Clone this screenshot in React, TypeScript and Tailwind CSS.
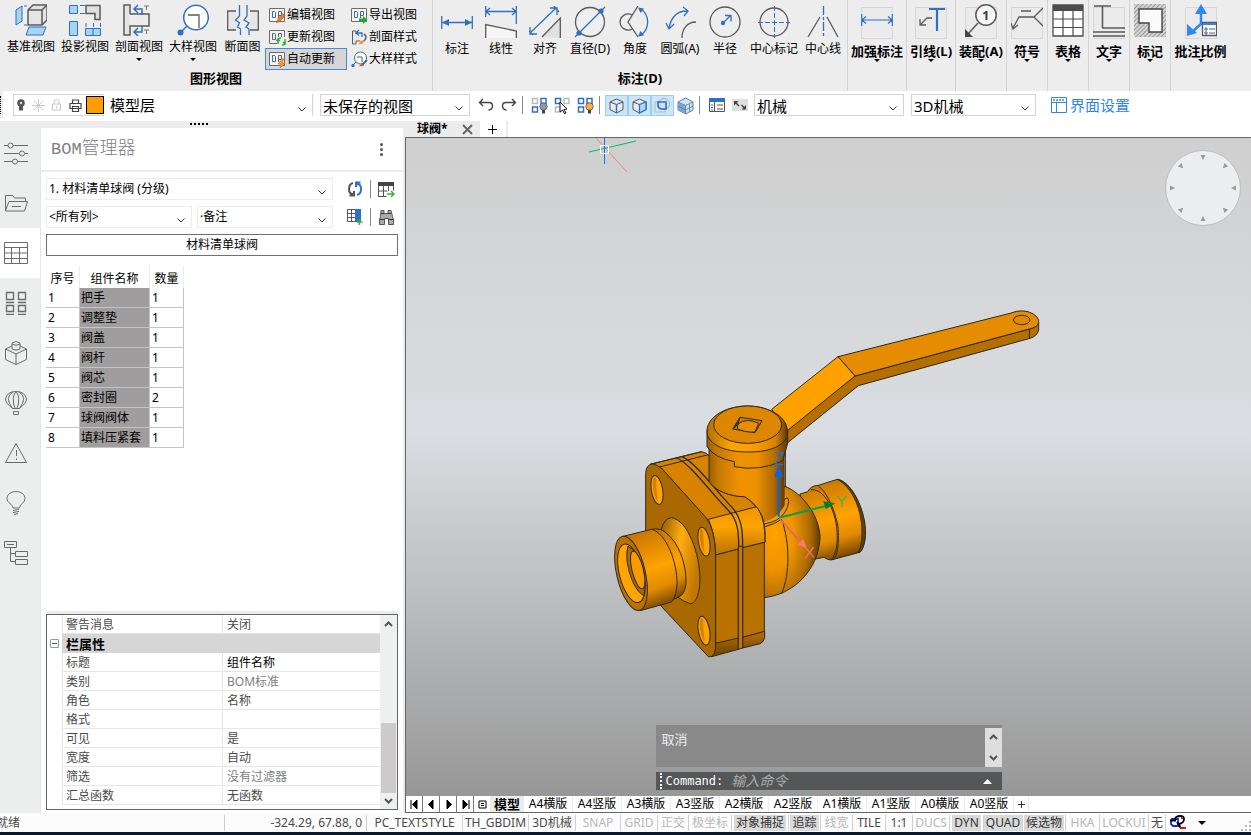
import React from "react";
import clsx from "clsx";

const BLUE = "#2f6fc4";
const GRAY = "#5a5a5a";

type Kids = { children?: React.ReactNode };

function Svg({ children, size = 32, box = 32, className }: Kids & { size?: number; box?: number; className?: string }) {
  return (
    <svg width={size} height={size} viewBox={`0 0 ${box} ${box}`} fill="none" className={clsx("shrink-0", className)} aria-hidden="true">
      {children}
    </svg>
  );
}

function Caret() {
  return (
    <svg width="6" height="3" viewBox="0 0 6 3" aria-hidden="true">
      <path d="M0 0h6L3 3z" fill="#000" />
    </svg>
  );
}

/* ---------- ribbon icons ---------- */

const baseView = (
  <Svg>
    <path d="M1 6l6-4v15l-6 4z" fill="#a9d4f0" stroke={BLUE} />
    <path d="M9 2h4M9 21h3" stroke={BLUE} strokeDasharray="3 2" />
    <path d="M13 6l5-5h14v15l-5 5H13z" fill="#e4e4e4" stroke={GRAY} strokeWidth="1.5" />
    <path d="M13 6h14v15M27 6l5-5" stroke={GRAY} strokeWidth="1.5" />
    <path d="M14 23h17l-3 8H11z" fill="#a9d4f0" stroke={BLUE} />
  </Svg>
);
const projView = (
  <Svg>
    <path d="M.5 1.500h8v8h-8z" fill="#a9d4f0" stroke={BLUE} />
    <path d="M17 1.500h14v14h-5v-6h-9z" fill="#e0e0e0" stroke={GRAY} strokeWidth="1.500" />
    <path d="M.5 17.500h8v14h-8zM16.500 24.500h15v7h-15zM24 24.500v7" fill="#a9d4f0" stroke={BLUE} />
    <path d="M11 1.500h5M11 9.500h5M17 19v4M24.500 19v4M31.500 19v4" stroke={BLUE} />
  </Svg>
);
const sectionView = (
  <Svg>
    <path d="M1 1h6v30H1z" fill="#e6e6e6" />
    <path d="M7 10h18v12H7z" fill="#ececec" />
    <path d="M7 10V1H1v30h6v-9h19V10H7" stroke={GRAY} strokeWidth="1.500" />
    <path d="M12 5h7v6M15 1l-4 4 4 4M12 28h7v-6M15 24l-4 4 4 4" stroke={BLUE} strokeWidth="1.500" />
    <path d="M21 2h5M23.500 2v4M21 26h5M23.500 26v4" stroke="#777" />
  </Svg>
);
const detailView = (
  <Svg>
    <circle cx="19" cy="13.500" r="12.300" fill="#fff" stroke={BLUE} strokeWidth="1.500" />
    <path d="M11 11h11v13" stroke={GRAY} strokeWidth="1.300" />
    <path d="M10 22l-7 7" stroke={BLUE} strokeWidth="1.500" />
    <circle cx="3.500" cy="28.500" r="3" fill={BLUE} />
  </Svg>
);
const breakView = (
  <Svg>
    <path d="M9 7H.7v19H9M23 7h8.300v19H23" fill="#e6e6e6" stroke={GRAY} strokeWidth="1.300" />
    <path d="M12.500 1v11l-4 4 4 3-2 4 3 2v6M20 1v11l-3 4 5 3-3 4 3 2v6" stroke={BLUE} strokeWidth="1.300" />
  </Svg>
);

const sheet = (
  <>
    <path d="M.5 1.500h15v13H.5z" fill="#f3f3f3" stroke="#6c6c6c" />
    <path d="M3.500 4.500h2l1 1v5h-3zM9.500 11V4.500h3V8M9.500 8.500h3" stroke="#4a6a86" />
  </>
);
const editViewIcon = (
  <Svg size={17} box={17}>
    {sheet}
    <path d="M7.500 15.500l1-3 5-6 2.500 2-5 6z" fill="#ee7d30" stroke="#b34a12" strokeWidth=".6" />
  </Svg>
);
const updateViewIcon = (
  <Svg size={17} box={17}>
    {sheet}
    <path d="M8 8h9v9H8z" fill="#f3f3f3" />
    <path d="M9 15v-4q0-2 3-2M16 10v4q0 2-3 2M7.500 12L9 10l2 2M14 13l2 2 1-2" stroke="#27ae35" strokeWidth="1.400" />
  </Svg>
);
const autoUpdateIcon = (
  <Svg size={17} box={17}>
    {sheet}
    <path d="M13 8l-4 5h3l-1 4 5-5h-3l2-4z" fill="#f5a623" stroke="#e0661a" strokeWidth=".7" />
  </Svg>
);
const exportViewIcon = (
  <Svg size={17} box={17}>
    {sheet}
    <path d="M8 11.500h4V9l4.500 4-4.500 4v-2.500H8z" fill="#23a82d" />
  </Svg>
);
const sectionStyleIcon = (
  <Svg size={17} box={17}>
    <path d="M5 5V2H1.500v13H5v-3h4" stroke={GRAY} fill="#e8e8e8" />
    <path d="M11 8V4H5.500M8 1L5 4l3 2.500" stroke={BLUE} strokeWidth="1.300" />
    <path d="M6 15q3 0 3-3l4-1q1 5-7 4z" fill="#f0a030" />
    <path d="M13 5q4 3 0 7" stroke="#59656e" strokeWidth="1.600" />
  </Svg>
);
const detailStyleIcon = (
  <Svg size={17} box={17}>
    <circle cx="9.500" cy="7" r="6" fill="#fff" stroke={BLUE} />
    <path d="M6 6h5v5M5 11l-3 3" stroke={GRAY} />
    <circle cx="2" cy="14.500" r="1.700" fill={BLUE} />
    <path d="M7 15q3 0 3-3l3 1q1 3-6 2z" fill="#a0683a" />
    <path d="M12 13l4-4" stroke="#59656e" strokeWidth="1.800" />
  </Svg>
);

const dimIcon = (
  <Svg>
    <path d="M.7 10v13M31.300 10v13M1 16.500h30" stroke={BLUE} strokeWidth="1.300" />
    <path d="M1 16.500l7-3.500v7zM31 16.500l-7-3.500v7z" fill={BLUE} />
  </Svg>
);
const linearIcon = (
  <Svg>
    <path d="M.7 0v11M31.300 0v18M1 5.500h30M5 2L1 5.500 5 9M27 2l4 3.500L27 9" stroke={BLUE} strokeWidth="1.300" />
    <path d="M.7 32V18.500L31.300 25v7" fill="#f6f6f6" stroke={GRAY} strokeWidth="1.300" />
  </Svg>
);
const alignedIcon = (
  <Svg>
    <path d="M31.300 32V12L13 31" fill="#e0e0e0" stroke={GRAY} strokeWidth="1.300" />
    <path d="M1 27L27 2M0 25l4 4M25 0l5 6M21 2h7v7M1 21v7h7" stroke={BLUE} strokeWidth="1.300" />
  </Svg>
);
const diameterIcon = (
  <Svg>
    <circle cx="16" cy="16" r="14.500" fill="#efefef" stroke={GRAY} strokeWidth="1.300" />
    <path d="M1 31L31 1" stroke={BLUE} strokeWidth="1.300" />
    <circle cx="5" cy="27" r="2.600" fill={BLUE} />
    <circle cx="27" cy="5" r="2.600" fill={BLUE} />
  </Svg>
);
const angleIcon = (
  <Svg>
    <path d="M19 0L9 16l10 15M13 9a8 8 0 100 14" stroke={GRAY} strokeWidth="1.300" />
    <path d="M22 3a16 16 0 010 26" stroke={BLUE} strokeWidth="1.300" />
    <path d="M19 1.500l6 1-3.500 4.500zM19 30.500l6-1-3.500-4.500z" fill={BLUE} />
  </Svg>
);
const arcIcon = (
  <Svg>
    <path d="M18 32C18 23 23 16 32 16" stroke={GRAY} strokeWidth="1.300" />
    <path d="M5 22C7 12 13 5 23 5M19 1l5 4-4 5M2 17l3 6 5-5" stroke={BLUE} strokeWidth="1.300" />
  </Svg>
);
const radiusIcon = (
  <Svg>
    <circle cx="16" cy="16" r="15" stroke={GRAY} strokeWidth="1.300" />
    <path d="M14 17l7-7M16 9.500h6v6" stroke={BLUE} strokeWidth="1.300" />
    <circle cx="14" cy="17" r="2.200" fill={BLUE} />
  </Svg>
);
const centerMarkIcon = (
  <Svg>
    <circle cx="16" cy="16" r="14" stroke={GRAY} strokeWidth="1.300" />
    <path d="M16.500 0v32M0 16.500h32" stroke={BLUE} strokeDasharray="5 2" />
  </Svg>
);
const centerLineIcon = (
  <Svg>
    <path d="M1 31l12-20M31 31L20 11" stroke={GRAY} strokeWidth="1.300" />
    <path d="M16.500 0v32" stroke={BLUE} strokeWidth="1.300" strokeDasharray="9 2 3 2" />
  </Svg>
);

const ghost = <path d="M.5 3.500h31v31H.5z" stroke="#d6d6d6" fill="#ebebeb" />;

function TallSvg({ children }: Kids) {
  return (
    <svg width="32" height="36" viewBox="0 0 32 36" fill="none" aria-hidden="true">
      {children}
    </svg>
  );
}

const toolGroups: { label: string; width: string; icon: React.ReactNode }[] = [
  {
    label: "加强标注",
    width: "w-[59px]",
    icon: (
      <TallSvg>
        {ghost}
        <path d="M.7 10v12M31.300 10v12M1 16h30M5 12.500L1 16l4 3.500M27 12.500l4 3.500-4 3.500" stroke={BLUE} strokeWidth="1.200" />
      </TallSvg>
    ),
  },
  {
    label: "引线(L)",
    width: "w-[49px]",
    icon: (
      <TallSvg>
        {ghost}
        <path d="M14 5h16M22 5v22" stroke={BLUE} strokeWidth="2.200" />
        <path d="M17 14h-5l-6 6M5 15v6h6" stroke={GRAY} strokeWidth="1.300" />
      </TallSvg>
    ),
  },
  {
    label: "装配(A)",
    width: "w-[51px]",
    icon: (
      <TallSvg>
        {ghost}
        <path d="M13 19L3 30" stroke={GRAY} strokeWidth="1.500" />
        <path d="M0 33v-8l8 8z" fill="#444" />
        <circle cx="21" cy="11" r="10.200" fill="#f6f6f6" stroke={GRAY} strokeWidth="1.500" />
        <text x="17" y="16" fontSize="13" fontWeight="700" fill="#444">1</text>
      </TallSvg>
    ),
  },
  {
    label: "符号",
    width: "w-[41px]",
    icon: (
      <TallSvg>
        {ghost}
        <path d="M32 4l-9 9 9 9M23 13H8L2 24M0 19l2 6 5-4M10 7h10" stroke={GRAY} strokeWidth="1.300" />
      </TallSvg>
    ),
  },
  {
    label: "表格",
    width: "w-[41px]",
    icon: (
      <TallSvg>
        <path d="M1 1h30v31H1z" fill="#fff" stroke="#4c4c4c" strokeWidth="1.300" />
        <path d="M1 1h30v6H1z" fill="#4c4c4c" />
        <path d="M1 15h30M1 23.500h30M11 6v26M21 6v26" stroke="#4c4c4c" strokeWidth="1.200" />
      </TallSvg>
    ),
  },
  {
    label: "文字",
    width: "w-[41px]",
    icon: (
      <TallSvg>
        {ghost}
        <path d="M1 2h17M9.500 2v22M9 24h23M0 28h32M0 32h32" stroke={GRAY} strokeWidth="1.600" />
      </TallSvg>
    ),
  },
  {
    label: "标记",
    width: "w-[41px]",
    icon: (
      <TallSvg>
        <defs>
          <pattern id="hatch" width="3" height="3" patternUnits="userSpaceOnUse" patternTransform="rotate(45)">
            <path d="M0 0v3" stroke="#8a8a8a" strokeWidth="1.600" />
          </pattern>
        </defs>
        <path d="M0 0h32v33H0z" fill="#d4d4d4" />
        <path d="M0 0h32v33H0z" fill="url(#hatch)" />
        <path d="M5 5h23v23H15v-9H5z" fill="#fafafa" stroke="#444" strokeWidth="1.400" />
      </TallSvg>
    ),
  },
  {
    label: "批注比例",
    width: "w-[59px]",
    icon: (
      <TallSvg>
        {ghost}
        <path d="M16 6v14L7 28" stroke="#2f86f6" strokeWidth="2.500" />
        <path d="M16 0l6 10H10zM2 32V20l10 9z" fill="#2f86f6" />
        <path d="M17.500 18.500h14v13h-14z" fill="#fff" stroke={GRAY} strokeWidth="1.300" />
        <path d="M18 20h13" stroke="#2f86f6" strokeWidth="2" />
        <path d="M20 24h2v2h-2zM20 28h2v2h-2z" stroke={BLUE} />
        <path d="M24 25h6M24 29h6" stroke={GRAY} />
      </TallSvg>
    ),
  },
];

function BigButton({ icon, label, width, caret }: { icon: React.ReactNode; label: string; width: string; caret?: boolean }) {
  return (
    <button type="button" className={clsx("flex shrink-0 flex-col items-center text-[12px] leading-4 whitespace-nowrap", width)}>
      {icon}
      <span className="mt-[3px]">{label}</span>
      {caret && <span className="mt-[3px] flex"><Caret /></span>}
    </button>
  );
}

function SmallButton({ icon, label, active }: { icon: React.ReactNode; label: string; active?: boolean }) {
  return (
    <button
      type="button"
      aria-pressed={active}
      className={clsx(
        "flex h-[22px] items-center gap-px border px-[3px] text-[12px] leading-4 whitespace-nowrap",
        active ? "border-[#3f8ce0] bg-[#d6d6d6]" : "border-transparent",
      )}
    >
      {icon}
      <span>{label}</span>
    </button>
  );
}

function Ribbon() {
  return (
    <div className="flex h-[91px] shrink-0 overflow-hidden bg-[#ededed]">
      <section className="flex w-[433px] shrink-0 flex-col border-r border-[#d2d2d2] pt-1 pl-1">
        <div className="flex h-[66px]">
          <BigButton icon={baseView} label="基准视图" width="w-[54px]" />
          <BigButton icon={projView} label="投影视图" width="w-[54px]" />
          <BigButton icon={sectionView} label="剖面视图" width="w-[54px]" caret />
          <BigButton icon={detailView} label="大样视图" width="w-[54px]" caret />
          <BigButton icon={breakView} label="断面图" width="w-[45px]" />
          <div className="flex w-[82px] shrink-0 flex-col">
            <SmallButton icon={editViewIcon} label="编辑视图" />
            <SmallButton icon={updateViewIcon} label="更新视图" />
            <SmallButton icon={autoUpdateIcon} label="自动更新" active />
          </div>
          <div className="flex shrink-0 flex-col">
            <SmallButton icon={exportViewIcon} label="导出视图" />
            <SmallButton icon={sectionStyleIcon} label="剖面样式" />
            <SmallButton icon={detailStyleIcon} label="大样样式" />
          </div>
        </div>
        <h2 className="pr-1 text-center text-[13px] leading-4 font-bold">图形视图</h2>
      </section>
      <section className="flex w-[415px] shrink-0 flex-col border-r border-[#d2d2d2] pt-1.5 pl-0.5">
        <div className="flex h-16">
          <BigButton icon={dimIcon} label="标注" width="w-11" />
          <BigButton icon={linearIcon} label="线性" width="w-11" />
          <BigButton icon={alignedIcon} label="对齐" width="w-11" />
          <BigButton icon={diameterIcon} label="直径(D)" width="w-[46px]" />
          <BigButton icon={angleIcon} label="角度" width="w-11" />
          <BigButton icon={arcIcon} label="圆弧(A)" width="w-[46px]" />
          <BigButton icon={radiusIcon} label="半径" width="w-11" />
          <BigButton icon={centerMarkIcon} label="中心标记" width="w-[54px]" />
          <BigButton icon={centerLineIcon} label="中心线" width="w-11" />
        </div>
        <h2 className="pr-0.5 text-center text-[13px] leading-4 font-bold">标注(D)</h2>
      </section>
      {toolGroups.map((g, i) => (
        <section key={g.label} className={clsx("shrink-0 pt-1", g.width, i < toolGroups.length - 1 && "border-r border-[#d2d2d2]")}>
          <button type="button" className="flex w-full flex-col items-center text-[13px] leading-4 font-bold whitespace-nowrap">
            {g.icon}
            <span className="mt-[3px]">{g.label}</span>
            <Caret />
          </button>
        </section>
      ))}
    </div>
  );
}

/* ---------- toolbar ---------- */

function Select({ label, value, className, textClass = "text-[15px]" }: { label: string; value: string; className?: string; textClass?: string }) {
  return (
    <div className={clsx("relative flex h-[22px] shrink-0 items-center border border-[#d4d4d4] bg-white", className)}>
      <select aria-label={label} defaultValue={value} className={clsx("h-full w-full appearance-none bg-transparent px-0.5 text-black outline-none", textClass)}>
        <option>{value}</option>
      </select>
      <svg width="8" height="5" viewBox="0 0 8 5" fill="none" className="pointer-events-none absolute right-1.5 bottom-1" aria-hidden="true">
        <path d="M.5.5L4 4 7.500.5" stroke="#333" />
      </svg>
    </div>
  );
}

function ToolSep() {
  return <span className="h-[18px] w-px shrink-0 bg-[#8a8a8a]" />;
}

function IconButton({ label, active, children }: Kids & { label: string; active?: boolean }) {
  return (
    <button
      type="button"
      aria-label={label}
      aria-pressed={active}
      className={clsx("flex h-[21px] w-[23px] shrink-0 items-center justify-center", active && "border border-[#99cdf3] bg-[#cce6f8]")}
    >
      {children}
    </button>
  );
}

function Squares({ fills, children }: Kids & { fills: string[] }) {
  return (
    <Svg size={17} box={17}>
      <path d="M1.500 1.500h5v5h-5z" stroke={fills[0]} strokeWidth="1.500" />
      <path d="M10 1.500h5v5h-5z" stroke={fills[1]} strokeWidth="1.500" />
      <path d="M1.500 10h5v5h-5z" stroke={fills[2]} strokeWidth="1.500" />
      {children}
    </Svg>
  );
}

function Bulb({ color }: { color: string }) {
  return (
    <>
      <circle cx="12.500" cy="9.500" r="3.700" fill={color} stroke="#555" strokeWidth=".8" />
      <path d="M11 13h3v3.500h-3z" fill="#444" />
    </>
  );
}

function Toolbar() {
  return (
    <div className="flex h-[30px] shrink-0 items-center bg-white pb-0.5">
      <div className="flex h-full w-[3px] shrink-0 items-center bg-[#ededed]">
        <span className="h-[18px] w-0 border-l border-dotted border-black" />
      </div>
      <div className="ml-2.5 flex h-[22px] w-[300px] shrink-0 items-center border border-[#d4d4d4]">
        <Svg size={12} box={12} className="mx-px">
          <circle cx="6" cy="4" r="3.800" fill="#555" />
          <path d="M4 7h4v4.500H4z" fill="#555" />
          <circle cx="6" cy="4" r="1.200" fill="#ddd" />
        </Svg>
        <Svg size={13} box={13} className="mx-1">
          <path d="M6.500 0v13M0 6.500h13M2 2l9 9M11 2l-9 9" stroke="#ccc" />
        </Svg>
        <Svg size={12} box={12} className="mx-0.5">
          <path d="M1.500 5h8v6h-8zM3 5V3a2.500 2.500 0 015 0v2M5.500 7v2" stroke="#c8c8c8" />
        </Svg>
        <Svg size={13} box={13} className="mx-1">
          <path d="M3.500 4V1h6v3M1 4.500h11v5H1zM3.500 7.500h6v5h-6z" stroke="#444" strokeWidth="1.200" fill="#fff" />
        </Svg>
        <span className="h-[18px] w-[18px] shrink-0 border border-black bg-[#ff9d00]" />
        <Select label="图层" value="模型层" className="min-w-0 flex-1 border-0 bg-transparent pl-1" />
      </div>
      <Select label="视图" value="未保存的视图" className="ml-[7px] w-[150px]" />
      <div className="ml-1 flex items-center">
        <IconButton label="撤销">
          <Svg size={16} box={16}>
            <path d="M5 2L1.500 5.500 5 9M2 5.500h9q3.500 0 3.500 3.500t-4 4" stroke="#444" strokeWidth="1.400" />
          </Svg>
        </IconButton>
        <IconButton label="重做">
          <Svg size={16} box={16}>
            <path d="M11 2l3.500 3.500L11 9M14 5.500H5Q1.500 5.500 1.500 9t4 4" stroke="#444" strokeWidth="1.400" />
          </Svg>
        </IconButton>
      </div>
      <span className="ml-0.5 flex"><ToolSep /></span>
      <div className="ml-[5px] flex items-center">
        <IconButton label="隐藏图元"><Squares fills={["#bbb", BLUE, BLUE]}><Bulb color="#8d99a5" /></Squares></IconButton>
        <IconButton label="选择图元">
          <Squares fills={[BLUE, "#bbb", "#bbb"]}>
            <path d="M6 5l7 7-3 .5 2 3.500-1.500.5-2-3.500L6 15z" fill="#fff" stroke="#111" />
          </Squares>
        </IconButton>
        <IconButton label="显示图元"><Squares fills={[BLUE, BLUE, BLUE]}><Bulb color="#f9b233" /></Squares></IconButton>
      </div>
      <span className="ml-0.5 flex"><ToolSep /></span>
      <div className="ml-[5px] flex items-center">
        <IconButton label="边" active>
          <Svg size={17} box={17}>
            <path d="M2 5l6.500-3L15 5v7.500L8.500 16 2 12.500zM2 5l6.500 2.500L15 5" stroke="#555" fill="#e3edf5" />
            <path d="M8.500 7.500V16" stroke={BLUE} strokeWidth="1.500" />
          </Svg>
        </IconButton>
        <IconButton label="面" active>
          <Svg size={17} box={17}>
            <path d="M2 5l6.500-3L15 5v7.500L8.500 16 2 12.500zM2 5l6.500 2.500" stroke="#555" fill="#e3edf5" />
            <path d="M8.500 7.500L15 5v7.500L8.500 16z" fill="#b4d8f4" stroke={BLUE} strokeWidth="1.300" />
          </Svg>
        </IconButton>
        <IconButton label="边界" active>
          <Svg size={17} box={17}>
            <path d="M5 5H1v10h10v-3" stroke="#b9b9b9" />
            <circle cx="10" cy="7" r="5.500" stroke="#b0b0b0" />
            <path d="M4 5h8v7H8q-4 0-4-4z" stroke={BLUE} strokeWidth="1.600" />
          </Svg>
        </IconButton>
        <IconButton label="实体">
          <Svg size={17} box={17}>
            <path d="M1 5l7.500-4L16 5v8l-7.500 4L1 13z" fill="#d3e2f0" stroke="#5580ad" />
            <path d="M1 5l7.500 3.500V17L1 13z" fill="#7ba7d2" />
            <path d="M1 5l7.500 3.500L16 5M8.500 8.500V17M8.500 13l7.500-4M12.500 7v8M1 9l7.500 4" stroke="#5580ad" strokeWidth=".8" />
          </Svg>
        </IconButton>
      </div>
      <span className="ml-0.5 flex"><ToolSep /></span>
      <div className="ml-[5px] flex items-center">
        <IconButton label="特性">
          <Svg size={16} box={16}>
            <path d="M.5 1.500h15v13H.5z" fill="#fff" stroke="#555" />
            <path d="M0 1h16v4H0z" fill={BLUE} />
            <path d="M5.500 5v10M8 8h6M8 12h6" stroke="#555" />
            <path d="M2 8h2M2 10.500h2M2 13h2" stroke={BLUE} />
          </Svg>
        </IconButton>
        <IconButton label="展开">
          <Svg size={16} box={16}>
            <path d="M0 2h16v12H0z" fill="#dedede" />
            <path d="M2 4h4.500L2 8.500zM14 12.500H9.500L14 8z" fill="#444" />
            <path d="M3 5l4 4M13 11.500L9.500 8" stroke="#444" strokeWidth="1.500" />
          </Svg>
        </IconButton>
      </div>
      <Select label="工作空间" value="机械" className="ml-[3px] w-[150px]" />
      <Select label="界面" value="3D机械" className="ml-[7px] w-[125px]" />
      <button type="button" className="ml-[15px] flex items-center gap-[3px] text-[15px] leading-5 whitespace-nowrap text-[#2d86f0]">
        <Svg size={16} box={16}>
          <path d="M.5.5h15v15H.5zM.5 5.500h15M5.500 5.500v10" stroke="currentColor" />
          <path d="M2 3h12" stroke="currentColor" strokeWidth="1.500" strokeDasharray="2 1" />
        </Svg>
        界面设置
      </button>
    </div>
  );
}

/* ---------- left rail ---------- */

const railItems: { label: string; art: React.ReactNode }[] = [
  {
    label: "参数",
    art: (
      <>
        <path d="M0 4.500h4M9 4.500h15M0 12.500h15M21 12.500h3M0 20.500h8M14 20.500h10" />
        <circle cx="6.500" cy="4.500" r="2.500" /><circle cx="18" cy="12.500" r="2.500" /><circle cx="11" cy="20.500" r="2.500" />
      </>
    ),
  },
  { label: "项目", art: <path d="M1.500 19.500v-15h7l2 2.500h11v4M1.500 19.500l3.500-9h18.500l-3 9.500h-19M8 15.500h9" /> },
  { label: "BOM管理器", art: <path d="M.5 1.500h23v21H.5zM.5 6.500h23M.5 12h23M.5 17.500h23M7.500 6.500v16M15.500 6.500v16" /> },
  { label: "块", art: <path d="M2.500 1.500h7v7h-7zM14.500 1.500h7v7h-7zM2.500 14.500h7v6h-7zM14.500 14.500h7v6h-7zM2 11.500h8M14 11.500h8M2 23.500h8M14 23.500h8" strokeWidth="1.300" /> },
  { label: "组件", art: <path d="M1.500 8L8 5M16 5l6.500 3v10.500L12 23.500 1.500 18.500V8L12 13l10.500-5M12 13v10.500M8 8V2q4-3 8 0v6q-4 2.500-8 0M8 3q4 2.500 8 0" /> },
  { label: "渲染", art: <path d="M8.500 17.500Q1.500 12 1.500 8 3 .5 12 .5T22.500 8q0 4-7 9.500zM8.500 17.500Q0 6 9 1M15.500 17.500Q24 6 15 1M11 17.500Q7 6 12 .5M13 17.500Q17 6 12 .5M9.500 20.500h5v3h-5z" /> },
  { label: "警告", art: <path d="M12 2.500l10.500 19h-21zM12.500 9v6M12.500 17.500v1.500" /> },
  { label: "提示", art: <path d="M9 17C9 13 3 12 3 7.500 3 3 7.500.5 12 .5s9 2.500 9 7C21 12 15.500 13 15.500 17zM9 19.500l6-1M9 21.500l6-1M10 23.500l4-1" /> },
  { label: "结构", art: <path d="M.5.5h12v6H.5zM3 3.500h7M6.500 6.500v14h5M6.500 12.500h5M11.500 10.500h12v5h-12zM11.500 18.500h12v5h-12z" /> },
];

function Rail() {
  return (
    <nav className="flex w-10 shrink-0 flex-col bg-[#eceded]">
      {railItems.map((item, i) => (
        <button key={item.label} type="button" aria-label={item.label} className={clsx("flex h-[50px] items-center pl-1 text-[#6b6b6b]", i === 2 && "bg-white")}>
          <svg width="24" height="24" viewBox="0 0 24 24" fill="none" stroke="currentColor" aria-hidden="true">{item.art}</svg>
        </button>
      ))}
    </nav>
  );
}

/* ---------- BOM panel ---------- */

const parts: [string, number][] = [
  ["把手", 1], ["调整垫", 1], ["阀盖", 1], ["阀杆", 1],
  ["阀芯", 1], ["密封圈", 2], ["球阀阀体", 1], ["填料压紧套", 1],
];

const properties: { name: string; value: string; tone?: string }[] = [
  { name: "标题", value: "组件名称", tone: "text-black" },
  { name: "类别", value: "BOM标准", tone: "text-[#808080]" },
  { name: "角色", value: "名称" },
  { name: "格式", value: "" },
  { name: "可见", value: "是" },
  { name: "宽度", value: "自动" },
  { name: "筛选", value: "没有过滤器", tone: "text-[#808080]" },
  { name: "汇总函数", value: "无函数" },
];

function PropertyRow({ name, value, tone }: { name: string; value: string; tone?: string }) {
  return (
    <tr className="h-[19px]">
      <td className="p-0" />
      <th scope="row" className="border-r border-b border-l border-[#e6e6e6] px-[3px] pt-0.5 pb-0 text-left font-normal">{name}</th>
      <td className={clsx("border-b border-[#e6e6e6] px-1 pt-0.5 pb-0", tone)}>{value}</td>
    </tr>
  );
}

function Chevron({ up }: { up?: boolean }) {
  return (
    <svg width="9" height="6" viewBox="0 0 9 6" fill="none" aria-hidden="true">
      <path d={up ? "M1 5l3.500-3.500L8 5" : "M1 1l3.500 3.500L8 1"} stroke="#555" strokeWidth="2" />
    </svg>
  );
}

function PropertyGrid() {
  return (
    <div className="border-t-[3px] border-[#ececec]">
      <div className="flex h-[196px] border border-[#666] bg-white">
        <div className="min-w-0 flex-1">
          <table className="w-full table-fixed border-separate border-spacing-0 text-[12px] leading-4 text-[#4a4a4a]">
            <colgroup>
              <col className="w-[15px]" />
              <col className="w-[161px]" />
              <col />
            </colgroup>
            <tbody>
              <PropertyRow name="警告消息" value="关闭" />
              <tr className="h-[19px]">
                <td className="p-0 text-center">
                  <button type="button" aria-label="折叠" className="ml-[3px] flex h-[9px] w-[9px] items-center justify-center rounded-[1px] border border-[#999]">
                    <span className="h-px w-[5px] bg-[#2f5da8]" />
                  </button>
                </td>
                <th colSpan={2} className="bg-[#d6d6d6] px-1 py-0 text-left text-[13px] font-bold text-black">栏属性</th>
              </tr>
              {properties.map((p) => <PropertyRow key={p.name} {...p} />)}
            </tbody>
          </table>
        </div>
        <div className="flex w-[17px] flex-col items-center bg-[#eef0f0]">
          <span className="flex h-[18px] items-center"><Chevron up /></span>
          <span className="flex-1" />
          <span className="h-[70px] w-[15px] bg-[#cccaca]" />
          <span className="flex h-4 items-center"><Chevron /></span>
        </div>
      </div>
    </div>
  );
}

function BomPanel() {
  return (
    <aside className="flex min-h-0 flex-1 flex-col bg-white text-[12px]">
      <header className="flex h-11 shrink-0 items-center justify-between border-b-2 border-[#ececec] pr-5 pl-2.5 text-[#808080]">
        <h1 className="pb-0.5 text-[18px] leading-6 font-light">
          <span className="font-['Liberation_Mono',monospace] text-[17px] font-normal">BOM</span>管理器
        </h1>
        <button type="button" aria-label="菜单" className="flex flex-col gap-0.5">
          <i className="h-[3px] w-[3px] rounded-full bg-[#555]" />
          <i className="h-[3px] w-[3px] rounded-full bg-[#555]" />
          <i className="h-[3px] w-[3px] rounded-full bg-[#555]" />
        </button>
      </header>
      <div className="flex min-h-0 flex-1 flex-col px-[5px] pb-[3px]">
        <div className="mt-1.5 flex items-center">
          <Select label="材料清单" value="1. 材料清单球阀 (分级)" className="min-w-0 flex-1 border-[#ececec]" textClass="text-[12px]" />
          <div className="flex w-[65px] items-center justify-between pr-[3px] pl-3.5">
            <button type="button" aria-label="刷新">
              <Svg size={16} box={16}>
                <path d="M6 2Q2 3 2 8t4 5M2.500 14.500H7V10" stroke="#555" strokeWidth="2" />
                <path d="M10 14q4-1 4-6t-4-5M13.500 1.500H9V6" stroke={BLUE} strokeWidth="2" />
              </Svg>
            </button>
            <ToolSep />
            <button type="button" aria-label="导出表格">
              <Svg size={17} box={17}>
                <path d="M.5 1.500h15v8M.5 1.500v14h8M5.500 5v10M10.500 5v5M.5 10h9" stroke="#555" />
                <path d="M0 1h16v4H0z" fill="#444" />
                <path d="M9 13h7M13 10l3 3-3 3" stroke="#3cae2e" strokeWidth="1.400" />
              </Svg>
            </button>
          </div>
        </div>
        <div className="mt-1.5 flex items-center">
          <Select label="列" value="<所有列>" className="w-[146px] border-[#ececec]" textClass="text-[12px]" />
          <Select label="属性" value="·备注" className="ml-[5px] min-w-0 flex-1 border-[#ececec]" textClass="text-[12px]" />
          <div className="flex w-[65px] items-center justify-between pr-[3px] pl-3.5">
            <button type="button" aria-label="添加列">
              <Svg size={16} box={16}>
                <path d="M.5.500h8v12h-8zM4.500.500v12M.5 4.500h8M.5 8.500h8" stroke="#555" />
                <path d="M8 0h6v13H8z" fill={BLUE} />
                <path d="M12.500 10v6M9.500 13h6" stroke="#3cae2e" strokeWidth="1.500" />
              </Svg>
            </button>
            <ToolSep />
            <button type="button" aria-label="查找">
              <Svg size={17} box={17}>
                <path d="M3 1.500h3v3h4v-3h3l1.500 6 1 3v5h-5v-6H6.500v6h-5v-5l1-3z" fill="#aaa" stroke="#555" />
                <path d="M2 10.500h4M10 10.500h5M3 4.500h3M10 4.500h3" stroke="#333" />
              </Svg>
            </button>
          </div>
        </div>
        <button type="button" className="mt-1.5 h-[22px] shrink-0 border border-[#707070] bg-white text-[12px] leading-4">材料清单球阀</button>
        <table className="mt-2.5 w-[138px] table-fixed border-separate border-spacing-0 text-left leading-[18px]">
          <colgroup>
            <col className="w-[34px]" />
            <col className="w-[70px]" />
            <col className="w-[34px]" />
          </colgroup>
          <thead>
            <tr className="h-[22px]">
              {["序号", "组件名称", "数量"].map((h) => (
                <th key={h} className="border-r border-[#ececec] px-0 pt-1 pb-0 text-center font-normal whitespace-nowrap">{h}</th>
              ))}
            </tr>
          </thead>
          <tbody>
            {parts.map(([name, count], i) => (
              <tr key={name} className="h-5">
                <td className="border-r border-b border-[#c4c4c4] px-0.5 py-0">{i + 1}</td>
                <td className="border-r border-b border-[#c4c4c4] bg-[#9f9d9d] px-px py-0 whitespace-nowrap">{name}</td>
                <td className="border-r border-b border-[#c4c4c4] px-0.5 py-0">{count}</td>
              </tr>
            ))}
          </tbody>
        </table>
        <div className="flex-1" />
        <PropertyGrid />
      </div>
    </aside>
  );
}

/* ---------- drawing area ---------- */

const EDGE = "#2b2a26";

function Valve() {
  return (
    <svg width="450" height="370" viewBox="0 0 1350 1110" className="absolute top-[162px] left-[194px]" strokeWidth="3" strokeLinejoin="round" role="img" aria-label="球阀">
      <defs>
        <linearGradient id="stem" x1="0" x2="1" y1="0" y2="0">
          <stop offset="0" stopColor="#9a5f00" /><stop offset=".12" stopColor="#c47800" /><stop offset=".4" stopColor="#f09200" />
          <stop offset=".62" stopColor="#ee9100" /><stop offset=".85" stopColor="#b06b00" /><stop offset="1" stopColor="#5f3b00" />
        </linearGradient>
        <linearGradient id="cap" x1="0" x2="1" y1="0" y2="0">
          <stop offset="0" stopColor="#b36e00" /><stop offset=".3" stopColor="#ffa400" /><stop offset=".6" stopColor="#fa9a00" />
          <stop offset=".85" stopColor="#d88400" /><stop offset="1" stopColor="#5e3a00" />
        </linearGradient>
        <linearGradient id="tube" x1=".35" x2=".6" y1="0" y2="1">
          <stop offset="0" stopColor="#c27600" /><stop offset=".2" stopColor="#dd8700" /><stop offset=".5" stopColor="#ffa300" />
          <stop offset=".75" stopColor="#e08a00" /><stop offset="1" stopColor="#6c4300" />
        </linearGradient>
        <radialGradient id="ball" cx=".2" cy=".42" r=".85">
          <stop offset="0" stopColor="#ffa300" /><stop offset=".4" stopColor="#ee9200" /><stop offset=".75" stopColor="#a96900" /><stop offset="1" stopColor="#4a2d00" />
        </radialGradient>
        <linearGradient id="boss" x1="0" x2="1" y1="0" y2=".5">
          <stop offset="0" stopColor="#8f5800" /><stop offset=".5" stopColor="#ffae10" /><stop offset="1" stopColor="#c37700" />
        </linearGradient>
        <linearGradient id="corner" x1="0" x2="0" y1="0" y2="1">
          <stop offset="0" stopColor="#ef9300" /><stop offset=".4" stopColor="#ffa400" /><stop offset="1" stopColor="#b87000" />
        </linearGradient>
        <linearGradient id="foot" x1="0" x2="0" y1="0" y2="1">
          <stop offset="0" stopColor="#b87000" /><stop offset="1" stopColor="#6b4200" />
        </linearGradient>
      </defs>

      <g stroke={EDGE}>
        {/* handle */}
        <path d="M765 228L1288 87Q1312 82 1316 68V90Q1312 108 1290 115L775 257 563 428 560 390z" fill="#b56e00" />
        <path d="M714 170L1230 40Q1270 24 1300 42 1318 54 1316 68 1312 82 1288 87L765 228z" fill="#e68c00" />
        <path d="M714 170L765 228 562 392 515 328z" fill="#ffa200" />
        <path d="M1288 87v28" />
        <ellipse cx="1265" cy="60" rx="25" ry="14" fill="#e08900" />

        {/* outlet */}
        <path d="M623 575Q632 557 655 556L712 538C755 545 795 630 795 700 795 735 785 757 775 758L693 780Q682 780 672 772L640 778 600 582z" fill="url(#tube)" />
        <path d="M712 538C760 545 806 650 795 720Q787 760 775 758 790 730 785 670 770 570 712 538z" fill="#6a4200" />
        <path d="M623 575C655 562 678 590 690 640 705 710 700 765 672 772" fill="none" stroke="none" />
        <path d="M632 570C662 562 700 610 710 680 716 730 708 765 693 780M655 558C680 575 705 630 714 680 718 730 712 770 700 778" fill="none" />

        {/* ball */}
        <path d="M553 558C610 580 660 650 660 715 655 810 580 885 490 893V665L535 640z" fill="url(#ball)" />
        <path d="M495 680Q525 672 545 658C570 730 570 820 545 881" fill="none" />
        <path d="M552 600Q566 585 566 605 562 640 530 660 515 668 492 672" fill="none" />

        {/* flange top */}
        <path d="M150 493L305 455Q320 457 329 470V545C345 572 390 590 434 590 475 615 495 660 495 700V727L428 745 347 765Q345 700 318 655L185 505z" fill="#d88300" />
        <path d="M325 658L470 620C488 645 495 675 495 727L347 765Q345 700 325 658z" fill="url(#corner)" />
        <path d="M170 503L325 464M150 493L305 455" fill="none" />

        {/* flange front and side */}
        <path d="M137 520Q138 492 160 492 172 495 185 505L320 655Q345 690 347 765V1060Q340 1072 325 1070L183 918 137 690z" fill="#aa6900" />
        <path d="M347 765L415 747V1030L347 1030zM428 743L493 727V995L428 1012z" fill="#b97100" />
        <path d="M347 1030L415 1014V1048L335 1070Q347 1062 347 1030zM428 1012L494 994V1012Q490 1028 480 1031L428 1044z" fill="url(#foot)" />
        <path d="M415 740L428 738V1044L415 1048z" fill="#c27700" />
        <path d="M230 474C270 490 330 575 384 630 415 660 416 700 416 740M246 470C290 490 345 570 396 622 425 655 428 690 428 740" fill="none" strokeWidth="4" />

        {/* bolt holes */}
        <g fill="#ffa300">
          <ellipse cx="171" cy="570" rx="17" ry="44" transform="rotate(-10 171 570)" />
          <ellipse cx="312" cy="725" rx="17" ry="44" transform="rotate(-10 312 725)" />
          <ellipse cx="312" cy="992" rx="17" ry="44" transform="rotate(-10 312 992)" />
        </g>
        <g fill="#d68200" stroke="none">
          <path d="M160 531q-8 35 13 76q-4-40-5-72z" />
          <path d="M301 686q-8 35 13 76q-4-40-5-72z" />
          <path d="M301 953q-8 35 13 76q-4-40-5-72z" />
        </g>

        {/* boss and inlet */}
        <path d="M183 690Q192 655 215 653C262 660 300 760 300 840 298 888 285 912 270 911Q250 905 232 890z" fill="url(#boss)" />
        <path d="M155 688Q180 683 196 697C235 725 260 790 258 850Q255 882 238 890L205 905z" fill="url(#tube)" />
        <path d="M65 710L155 688C200 700 232 790 231 850 230 880 222 903 212 907L120 932z" fill="url(#tube)" />
        <ellipse cx="93" cy="820" rx="43" ry="114" transform="rotate(-13 93 820)" fill="#b97100" />
        <ellipse cx="94" cy="820" rx="36" ry="90" transform="rotate(-14 94 820)" fill="#ffa400" />
        <path d="M84 738Q72 780 98 845 115 880 132 887 138 855 130 810 115 755 84 738z" fill="#ad6900" />
        <ellipse cx="113" cy="810" rx="17" ry="58" transform="rotate(-14 113 810)" fill="#f69b00" />

        {/* stem and cap */}
        <path d="M327 430V545C345 572 390 590 434 590 470 612 485 640 491 665Q535 655 554 615V430z" fill="url(#stem)" stroke="none" />
        <path d="M327 430V545C345 572 390 590 434 590 470 612 485 640 491 665M556 440V560" fill="none" />
        <path d="M321 390V440Q345 475 403 485V500Q480 515 548 482L563 430V390z" fill="url(#stem)" />
        <path d="M321 390C325 345 385 318 442 318S560 345 562 392V410C545 445 495 457 442 456 385 456 335 440 322 405z" fill="url(#cap)" />
        <ellipse cx="443" cy="374" rx="102" ry="56" fill="#dd8700" />
        <path d="M420 352L486 362 465 398 398 387z" fill="#d07e00" />
        <path d="M420 352L414 372 402 385z" fill="#8a5400" />
        <path d="M414 372Q440 352 476 370L465 396Q435 398 412 386z" fill="#e88e00" />
      </g>

      {/* axes */}
      <path d="M536 650V520" stroke="#0b63e6" strokeWidth="6" />
      <path d="M536 495l13 35h-26z" fill="#0b63e6" />
      <path d="M525 458h24l-24 36h24" stroke="#1a72ea" fill="none" strokeWidth="4" />
      <path d="M538 653L680 617" stroke="#08a045" strokeWidth="6" />
      <path d="M706 610l-36-6 7 24z" fill="#087c35" />
      <path d="M713 587l13 18 14-18M726 605v16" stroke="#3cb54a" fill="none" strokeWidth="4" />
      <path d="M538 655L600 725" stroke="#dd6a66" strokeWidth="6" />
      <path d="M620 746l-10-30-16 17z" fill="#f27b7b" />
      <path d="M616 742l26 31M641 741l-25 33" stroke="#f0716c" strokeWidth="4" />
    </svg>
  );
}

function Compass() {
  const marks = [0, 45, 90, 135, 180, 225, 270, 315];
  return (
    <svg width="78" height="78" viewBox="0 0 78 78" className="absolute top-[11px] right-[9px]" role="img" aria-label="视图罗盘">
      <circle cx="39" cy="39" r="37.500" fill="#ecedef" stroke="#bdbdbd" />
      {marks.map((a) => (
        <path key={a} d="M36.500 6h5L39 11z" fill="#9a9a9a" transform={`rotate(${a} 39 39)`} />
      ))}
    </svg>
  );
}

function CommandLine() {
  return (
    <div className="absolute inset-x-0 bottom-1.5 mx-auto w-[346px]">
      <div className="flex h-[42px] bg-[#898989] text-[13px] text-[#ececec]">
        <p className="flex-1 px-1.5 pt-1 leading-5">取消</p>
        <div className="mt-[3px] flex w-[17px] flex-col items-center justify-between bg-[#dedede] py-1.5">
          <Chevron up />
          <Chevron />
        </div>
      </div>
      <div className="mt-[5px] flex h-[18px] items-center bg-[#545658] pr-2.5 pl-1">
        <span className="h-4 border-l-2 border-dotted border-white" />
        <label htmlFor="command" className="ml-1 font-['DejaVu_Sans_Mono',monospace] text-[12px] leading-4 text-white">Command:</label>
        <input id="command" placeholder="输入命令" className="ml-2 h-4 min-w-0 flex-1 bg-transparent text-[14px] leading-4 italic outline-none placeholder:text-[#aaa]" />
        <svg width="9" height="5" viewBox="0 0 9 5" aria-hidden="true"><path d="M0 5h9L4.500 0z" fill="#fff" /></svg>
      </div>
    </div>
  );
}

const sheets = ["A4横版", "A4竖版", "A3横版", "A3竖版", "A2横版", "A2竖版", "A1横版", "A1竖版", "A0横版", "A0竖版"];

const navArt = [
  ["第一个", "M2 1v9M8 1v9L3.500 5.500z"],
  ["上一个", "M7 1v9L2.500 5.500z"],
  ["下一个", "M4 1v9l4.500-4.500z"],
  ["最后一个", "M9 1v9M3 1v9l4.500-4.500z"],
];

function Workspace() {
  return (
    <main className="flex min-w-0 flex-1 flex-col">
      <div className="flex h-4 shrink-0 bg-white">
        <div className="flex items-center bg-[#ececec] pr-[7px] pl-3">
          <button type="button" className="text-[12px] leading-4 font-bold">球阀*</button>
          <button type="button" aria-label="关闭" className="ml-3.5">
            <Svg size={11} box={11}><path d="M1 1l9 9M10 1l-9 9" stroke="#666" strokeWidth="2" /></Svg>
          </button>
        </div>
        <button type="button" aria-label="新建" className="flex w-7 items-center justify-center border-r-2 border-[#ececec]">
          <Svg size={9} box={9}><path d="M4.500 0v9M0 4.500h9" stroke="#000" /></Svg>
        </button>
      </div>
      <div className="relative min-h-0 flex-1 overflow-hidden border-t border-l border-[#666] bg-linear-to-b from-[#cfcfcf] via-[#dadde1] via-45% to-[#979797]">
        <svg width="60" height="40" viewBox="0 0 60 40" fill="none" className="absolute top-0 left-[175px]" aria-hidden="true">
          <path d="M15 0l31 34" stroke="#f08080" />
          <path d="M8 14L55 3" stroke="#00c060" />
          <path d="M23.500 0v26" stroke="#1a72ea" />
          <path d="M19.500 7.500h8v8h-8z" stroke="#fff" />
        </svg>
        <Compass />
        <Valve />
        <CommandLine />
      </div>
      <div className="flex h-[17px] shrink-0 items-stretch border-b border-l border-[#666] bg-white text-[12px] leading-4">
        {navArt.map(([label, d]) => (
          <button key={label} type="button" aria-label={label} className="flex w-[17px] items-center justify-center border-r border-[#777]">
            <Svg size={11} box={11}><path d={d} fill="#000" stroke="#000" /></Svg>
          </button>
        ))}
        <button type="button" aria-label="布局列表" className="flex w-4 items-center justify-center">
          <Svg size={9} box={9}><path d="M1 1h7v7H1zM3 3.500h3M3 5.500h3" stroke="#000" /></Svg>
        </button>
        <button type="button" className="w-[34px] bg-[#ececec] text-[13px] font-bold">模型</button>
        {sheets.map((s) => (
          <button key={s} type="button" className="w-[49px] border-r border-[#ececec] whitespace-nowrap">{s}</button>
        ))}
        <button type="button" aria-label="新建布局" className="flex w-[15px] items-center justify-center border-r border-[#ececec]">
          <Svg size={7} box={7}><path d="M3.500 0v7M0 3.500h7" stroke="#333" /></Svg>
        </button>
      </div>
    </main>
  );
}

/* ---------- status bar ---------- */

const statusItems: { label: string; width: string; tone: "text" | "off" | "on" }[] = [
  { label: "PC_TEXTSTYLE", width: "w-24", tone: "text" },
  { label: "TH_GBDIM", width: "w-[66px]", tone: "text" },
  { label: "3D机械", width: "w-[47px]", tone: "text" },
  { label: "SNAP", width: "w-[45px]", tone: "off" },
  { label: "GRID", width: "w-[37px]", tone: "off" },
  { label: "正交", width: "w-[31px]", tone: "off" },
  { label: "极坐标", width: "w-[43px]", tone: "off" },
  { label: "对象捕捉", width: "w-[57px]", tone: "on" },
  { label: "追踪", width: "w-8", tone: "on" },
  { label: "线宽", width: "w-8", tone: "off" },
  { label: "TILE", width: "w-[33px]", tone: "text" },
  { label: "1:1", width: "w-[27px]", tone: "text" },
  { label: "DUCS", width: "w-[37px]", tone: "off" },
  { label: "DYN", width: "w-[34px]", tone: "on" },
  { label: "QUAD", width: "w-[39px]", tone: "on" },
  { label: "候选物", width: "w-[43px]", tone: "on" },
  { label: "HKA", width: "w-[34px]", tone: "off" },
  { label: "LOCKUI", width: "w-[49px]", tone: "off" },
  { label: "无", width: "w-[17px]", tone: "text" },
];

function StatusBar() {
  return (
    <footer className="flex h-[22px] shrink-0 items-center border-b-[3px] border-[#0b1a2b] bg-[#fcfcfc] text-[12px] leading-4 whitespace-nowrap text-[#4a4a4a]">
      <div className="w-[225px] shrink-0 border-r border-[#ccc]"><span className="-ml-1">就绪</span></div>
      <div className="w-[142px] shrink-0 border-r border-[#ccc] pr-1 text-right">-324.29, 67.88, 0</div>
      {statusItems.map((s) => (
        <div key={s.label} className={clsx("flex h-4 shrink-0 justify-center border-r border-[#d0d0d0]", s.width)}>
          <button
            type="button"
            aria-pressed={s.tone === "on"}
            className={clsx(s.tone === "on" && "bg-[#d9d9d9] px-0.5 text-[#333]", s.tone === "off" && "text-[#b8b8b8]")}
          >
            {s.label}
          </button>
        </div>
      ))}
      <Svg size={16} box={16} className="ml-1">
        <path d="M7 4H2L1 6v3l2 2h4M8 3v9" stroke="#1226d8" strokeWidth="1.800" />
        <path d="M5 4q1-3 5-3t4 3q0 4-5 5l2 5M0 5.500h6M7 7l3 5" stroke="#000" strokeWidth="1.800" />
        <path d="M10 13h6M11 3h2" stroke="#f01010" strokeWidth="2" />
      </Svg>
      <button type="button" aria-label="更多" className="ml-3">
        <svg width="8" height="4" viewBox="0 0 8 4" aria-hidden="true"><path d="M0 0h8L4 4z" fill="#000" /></svg>
      </button>
      <Svg size={10} box={10} className="mt-1.5 ml-auto">
        <path d="M8 0h2v2H8zM4 4h2v2H4zM8 4h2v2H8zM0 8h2v2H0zM4 8h2v2H4zM8 8h2v2H8z" fill="#bbb" />
      </Svg>
    </footer>
  );
}

export default function App() {
  return (
    <div className="flex h-screen flex-col overflow-hidden bg-white font-['Noto_Sans','Noto_Sans_CJK_SC',sans-serif] text-black">
      <Ribbon />
      <Toolbar />
      <div className="flex min-h-0 flex-1">
        <div className="flex w-[405px] shrink-0 flex-col bg-[#ececec]">
          <div className="flex h-[7px] shrink-0 justify-center pt-0.5 pr-2">
            <span className="h-0 w-[18px] border-t-2 border-dotted border-black" />
          </div>
          <div className="flex min-h-0 flex-1 pr-0.5">
            <Rail />
            <div className="flex min-h-0 min-w-0 flex-1 border-l border-[#e4e4e4]"><BomPanel /></div>
          </div>
        </div>
        <Workspace />
      </div>
      <StatusBar />
    </div>
  );
}
